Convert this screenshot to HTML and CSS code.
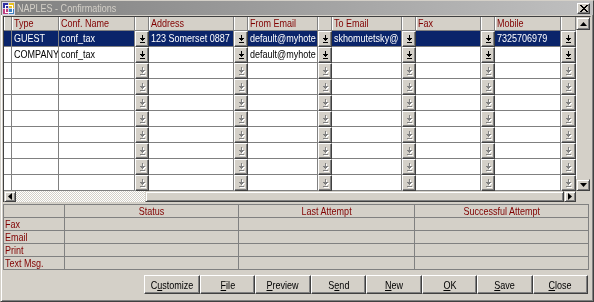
FILE: index.html
```html
<!DOCTYPE html>
<html lang="en">
<head>
  <meta charset="UTF-8" />
  <title>NAPLES - Confirmations</title>
  <link rel="stylesheet" href="styles.css">
</head>
<body>
  <svg class="defs" xmlns="http://www.w3.org/2000/svg">
    <symbol id="dl" viewBox="0 0 7 8">
      <rect x="3" y="0" width="1" height="3"/>
      <rect x="1" y="3" width="5" height="1"/>
      <rect x="2" y="4" width="3" height="1"/>
      <rect x="3" y="5" width="1" height="1"/>
      <rect x="1" y="7" width="5" height="1"/>
    </symbol>
  </svg>

  <div class="window">
    <!-- title bar -->
    <div class="titlebar">
      <svg class="app-icon" viewBox="0 0 13 13" shape-rendering="crispEdges">
        <rect x="0" y="0" width="13" height="13" fill="#d8d8e8"/>
        <rect x="1" y="1" width="5" height="5" fill="#3030a0"/>
        <rect x="7" y="1" width="5" height="5" fill="#e8c020"/>
        <rect x="1" y="7" width="5" height="5" fill="#c04080"/>
        <rect x="7" y="7" width="5" height="5" fill="#4080c0"/>
        <rect x="3" y="3" width="7" height="7" fill="none" stroke="#fff" stroke-width="1"/>
      </svg>
      <span class="title"><span class="t">NAPLES - Confirmations</span></span>
      <span class="close-btn">
        <svg width="8" height="7" viewBox="0 0 8 7" shape-rendering="crispEdges">
          <path d="M0 0h2v1h-2zM6 0h2v1h-2zM1 1h2v1h-2zM5 1h2v1h-2zM2 2h4v1h-4zM3 3h2v1h-2zM2 4h4v1h-4zM1 5h2v1h-2zM5 5h2v1h-2zM0 6h2v1h-2zM6 6h2v1h-2z"/>
        </svg>
      </span>
    </div>

    <div class="main">
      <!-- confirmation grid -->
      <div class="grid">
        <div class="table">
          <div class="row head">
            <div class="cell"></div>
            <div class="cell"><span class="t">Type</span></div>
            <div class="cell"><span class="t">Conf. Name</span></div>
            <div class="cell"></div>
            <div class="cell"><span class="t">Address</span></div>
            <div class="cell"></div>
            <div class="cell"><span class="t">From Email</span></div>
            <div class="cell"></div>
            <div class="cell"><span class="t">To Email</span></div>
            <div class="cell"></div>
            <div class="cell"><span class="t">Fax</span></div>
            <div class="cell"></div>
            <div class="cell"><span class="t">Mobile</span></div>
            <div class="cell"></div>
          </div>

          <div class="row sel">
            <div class="cell"></div>
            <div class="cell"><span class="t">GUEST</span></div>
            <div class="cell"><span class="t">conf_tax</span></div>
            <div class="cell drop"><svg><use href="#dl"/></svg></div>
            <div class="cell"><span class="t">123 Somerset 0887</span></div>
            <div class="cell drop"><svg><use href="#dl"/></svg></div>
            <div class="cell"><span class="t">default@myhote</span></div>
            <div class="cell drop"><svg><use href="#dl"/></svg></div>
            <div class="cell"><span class="t">skhomutetsky@</span></div>
            <div class="cell drop"><svg><use href="#dl"/></svg></div>
            <div class="cell"></div>
            <div class="cell drop"><svg><use href="#dl"/></svg></div>
            <div class="cell"><span class="t">7325706979</span></div>
            <div class="cell drop"><svg><use href="#dl"/></svg></div>
          </div>

          <div class="row">
            <div class="cell"></div>
            <div class="cell"><span class="t">COMPANY</span></div>
            <div class="cell"><span class="t">conf_tax</span></div>
            <div class="cell drop"><svg><use href="#dl"/></svg></div>
            <div class="cell"></div>
            <div class="cell drop"><svg><use href="#dl"/></svg></div>
            <div class="cell"><span class="t">default@myhote</span></div>
            <div class="cell drop"><svg><use href="#dl"/></svg></div>
            <div class="cell"></div>
            <div class="cell drop"><svg><use href="#dl"/></svg></div>
            <div class="cell"></div>
            <div class="cell drop"><svg><use href="#dl"/></svg></div>
            <div class="cell"></div>
            <div class="cell drop"><svg><use href="#dl"/></svg></div>
          </div>

          <div class="row empty">
            <div class="cell"></div><div class="cell"></div><div class="cell"></div>
            <div class="cell drop"><svg><use href="#dl"/></svg></div><div class="cell"></div>
            <div class="cell drop"><svg><use href="#dl"/></svg></div><div class="cell"></div>
            <div class="cell drop"><svg><use href="#dl"/></svg></div><div class="cell"></div>
            <div class="cell drop"><svg><use href="#dl"/></svg></div><div class="cell"></div>
            <div class="cell drop"><svg><use href="#dl"/></svg></div><div class="cell"></div>
            <div class="cell drop"><svg><use href="#dl"/></svg></div>
          </div>
          <div class="row empty">
            <div class="cell"></div><div class="cell"></div><div class="cell"></div>
            <div class="cell drop"><svg><use href="#dl"/></svg></div><div class="cell"></div>
            <div class="cell drop"><svg><use href="#dl"/></svg></div><div class="cell"></div>
            <div class="cell drop"><svg><use href="#dl"/></svg></div><div class="cell"></div>
            <div class="cell drop"><svg><use href="#dl"/></svg></div><div class="cell"></div>
            <div class="cell drop"><svg><use href="#dl"/></svg></div><div class="cell"></div>
            <div class="cell drop"><svg><use href="#dl"/></svg></div>
          </div>
          <div class="row empty">
            <div class="cell"></div><div class="cell"></div><div class="cell"></div>
            <div class="cell drop"><svg><use href="#dl"/></svg></div><div class="cell"></div>
            <div class="cell drop"><svg><use href="#dl"/></svg></div><div class="cell"></div>
            <div class="cell drop"><svg><use href="#dl"/></svg></div><div class="cell"></div>
            <div class="cell drop"><svg><use href="#dl"/></svg></div><div class="cell"></div>
            <div class="cell drop"><svg><use href="#dl"/></svg></div><div class="cell"></div>
            <div class="cell drop"><svg><use href="#dl"/></svg></div>
          </div>
          <div class="row empty">
            <div class="cell"></div><div class="cell"></div><div class="cell"></div>
            <div class="cell drop"><svg><use href="#dl"/></svg></div><div class="cell"></div>
            <div class="cell drop"><svg><use href="#dl"/></svg></div><div class="cell"></div>
            <div class="cell drop"><svg><use href="#dl"/></svg></div><div class="cell"></div>
            <div class="cell drop"><svg><use href="#dl"/></svg></div><div class="cell"></div>
            <div class="cell drop"><svg><use href="#dl"/></svg></div><div class="cell"></div>
            <div class="cell drop"><svg><use href="#dl"/></svg></div>
          </div>
          <div class="row empty">
            <div class="cell"></div><div class="cell"></div><div class="cell"></div>
            <div class="cell drop"><svg><use href="#dl"/></svg></div><div class="cell"></div>
            <div class="cell drop"><svg><use href="#dl"/></svg></div><div class="cell"></div>
            <div class="cell drop"><svg><use href="#dl"/></svg></div><div class="cell"></div>
            <div class="cell drop"><svg><use href="#dl"/></svg></div><div class="cell"></div>
            <div class="cell drop"><svg><use href="#dl"/></svg></div><div class="cell"></div>
            <div class="cell drop"><svg><use href="#dl"/></svg></div>
          </div>
          <div class="row empty">
            <div class="cell"></div><div class="cell"></div><div class="cell"></div>
            <div class="cell drop"><svg><use href="#dl"/></svg></div><div class="cell"></div>
            <div class="cell drop"><svg><use href="#dl"/></svg></div><div class="cell"></div>
            <div class="cell drop"><svg><use href="#dl"/></svg></div><div class="cell"></div>
            <div class="cell drop"><svg><use href="#dl"/></svg></div><div class="cell"></div>
            <div class="cell drop"><svg><use href="#dl"/></svg></div><div class="cell"></div>
            <div class="cell drop"><svg><use href="#dl"/></svg></div>
          </div>
          <div class="row empty">
            <div class="cell"></div><div class="cell"></div><div class="cell"></div>
            <div class="cell drop"><svg><use href="#dl"/></svg></div><div class="cell"></div>
            <div class="cell drop"><svg><use href="#dl"/></svg></div><div class="cell"></div>
            <div class="cell drop"><svg><use href="#dl"/></svg></div><div class="cell"></div>
            <div class="cell drop"><svg><use href="#dl"/></svg></div><div class="cell"></div>
            <div class="cell drop"><svg><use href="#dl"/></svg></div><div class="cell"></div>
            <div class="cell drop"><svg><use href="#dl"/></svg></div>
          </div>
          <div class="row empty">
            <div class="cell"></div><div class="cell"></div><div class="cell"></div>
            <div class="cell drop"><svg><use href="#dl"/></svg></div><div class="cell"></div>
            <div class="cell drop"><svg><use href="#dl"/></svg></div><div class="cell"></div>
            <div class="cell drop"><svg><use href="#dl"/></svg></div><div class="cell"></div>
            <div class="cell drop"><svg><use href="#dl"/></svg></div><div class="cell"></div>
            <div class="cell drop"><svg><use href="#dl"/></svg></div><div class="cell"></div>
            <div class="cell drop"><svg><use href="#dl"/></svg></div>
          </div>
        </div>

        <div class="vscroll">
          <span class="sbtn up"><svg width="7" height="4" viewBox="0 0 7 4"><path d="M3.5 0L7 4H0z"/></svg></span>
          <span class="vthumb"></span>
          <span class="sbtn down"><svg width="7" height="4" viewBox="0 0 7 4"><path d="M0 0h7L3.5 4z"/></svg></span>
        </div>

        <div class="hscroll">
          <span class="sbtn"><svg width="4" height="7" viewBox="0 0 4 7"><path d="M4 0v7L0 3.5z"/></svg></span>
          <span class="track"></span>
          <span class="hthumb"></span>
          <span class="sbtn"><svg width="4" height="7" viewBox="0 0 4 7"><path d="M0 0v7l4-3.5z"/></svg></span>
        </div>
        <div class="corner"></div>
      </div>

      <!-- delivery status -->
      <div class="status">
        <div class="srow shead"><div></div><div><span class="t">Status</span></div><div><span class="t">Last Attempt</span></div><div><span class="t">Successful Attempt</span></div></div>
        <div class="srow"><div><span class="t">Fax</span></div><div></div><div></div><div></div></div>
        <div class="srow"><div><span class="t">Email</span></div><div></div><div></div><div></div></div>
        <div class="srow"><div><span class="t">Print</span></div><div></div><div></div><div></div></div>
        <div class="srow"><div><span class="t">Text Msg.</span></div><div></div><div></div><div></div></div>
      </div>

      <div class="buttons">
        <button><span class="t">C<u>u</u>stomize</span></button>
        <button><span class="t"><u>F</u>ile</span></button>
        <button><span class="t"><u>P</u>review</span></button>
        <button><span class="t">S<u>e</u>nd</span></button>
        <button><span class="t"><u>N</u>ew</span></button>
        <button><span class="t"><u>O</u>K</span></button>
        <button><span class="t"><u>S</u>ave</span></button>
        <button><span class="t"><u>C</u>lose</span></button>
      </div>
    </div>
  </div>
</body>
</html>
```

FILE: styles.css
```css
* { box-sizing: border-box; }
body {
  margin: 0;
  font-family: "Liberation Sans", Arial, sans-serif;
  font-size: 11px;
  color: #000;
  background: #d4d0c8;
}
.defs { display: none; }

/* Arial Narrow look: squeeze the text horizontally */
.t {
  display: inline-block;
  transform: scaleX(0.82);
  transform-origin: 0 50%;
}

.window {
  width: 594px;
  height: 302px;
  background: #d4d0c8;
  border: 1px solid;
  border-color: #d4d0c8 #404040 #404040 #d4d0c8;
  box-shadow: inset 1px 1px #fff, inset -1px -1px #808080;
}

/* title bar */
.titlebar {
  display: flex;
  align-items: center;
  height: 14px;
  padding: 0 3px 0 1px;
  background: linear-gradient(to right, #808080, #c0c0c0);
  color: #d4d0c8;
}
.app-icon { width: 13px; height: 13px; margin-right: 2px; }
.title { flex: 1; line-height: 14px; white-space: nowrap; }
.close-btn {
  display: flex;
  align-items: center;
  justify-content: center;
  width: 13px;
  height: 11px;
  background: #d4d0c8;
  border: 1px solid;
  border-color: #fff #404040 #404040 #fff;
  box-shadow: inset -1px -1px #808080;
}

.main { padding: 1px 2px 0; }

/* grid */
.grid {
  display: grid;
  grid-template-columns: 572px 14px;
  width: 588px;
  border-top: 1px solid #404040;
  border-left: 1px solid #404040;
  border-right: 1px solid #d4d0c8;
}
.row {
  display: grid;
  grid-template-columns: 8px 47px 76px 14px 85px 14px 70px 14px 70px 14px 65px 14px 66px 15px;
  height: 16px;
}
.row.head { height: 14px; }
.cell {
  background: #fff;
  border-right: 1px solid #808080;
  border-bottom: 1px solid #808080;
  padding-left: 2px;
  line-height: 15px;
  overflow: hidden;
  white-space: nowrap;
}
.head .cell {
  background: #d4d0c8;
  color: #800000;
  line-height: 13px;
  box-shadow: inset 1px 0 #fff;
}
.sel .cell { background: #0a246a; color: #fff; }
.cell.drop {
  display: flex;
  align-items: center;
  justify-content: center;
  padding: 0;
  background: #d4d0c8;
  border: 1px solid;
  border-color: #fff #404040 #404040 #fff;
  box-shadow: inset -1px -1px #808080;
  color: #000;
}
.drop svg { width: 7px; height: 8px; fill: currentColor; shape-rendering: crispEdges; }
.empty .drop { color: #808080; }
.empty .drop svg { filter: drop-shadow(1px 1px 0 #fff); }

/* scrollbars */
.sbtn {
  display: flex;
  align-items: center;
  justify-content: center;
  background: #d4d0c8;
  border: 1px solid;
  border-color: #d4d0c8 #404040 #404040 #d4d0c8;
  box-shadow: inset 1px 1px #fff, inset -1px -1px #808080;
}
.vscroll { display: flex; flex-direction: column; }
.vscroll .up { height: 13px; }
.vscroll .down { height: 12px; }
.vthumb {
  flex: 1;
  background: #d4d0c8;
  border-left: 1px solid #fff;
}
.hscroll { display: flex; height: 11px; }
.hscroll .sbtn { width: 12px; }
.track {
  width: 129px;
  background: repeating-conic-gradient(#d4d0c8 0 25%, #fff 0 50%) 0 0 / 2px 2px;
}
.hthumb {
  flex: 1;
  background: #d4d0c8;
  border: 1px solid;
  border-color: #d4d0c8 #404040 #404040 #d4d0c8;
  box-shadow: inset 1px 1px #fff, inset -1px -1px #808080;
}
.corner { background: #d4d0c8; }

/* status table */
.status {
  width: 586px;
  margin-top: 2px;
  border-top: 1px solid #808080;
  border-left: 1px solid #808080;
}
.srow {
  display: grid;
  grid-template-columns: 61px 174px 176px 174px;
  height: 13px;
}
.srow > div {
  border-right: 1px solid #808080;
  border-bottom: 1px solid #808080;
  padding-left: 1px;
  color: #800000;
  line-height: 12px;
  white-space: nowrap;
}
.shead > div { text-align: center; }
.shead .t, .buttons .t { transform-origin: 50% 50%; }

/* buttons */
.buttons {
  display: flex;
  justify-content: flex-end;
  margin-top: 5px;
  padding-right: 3px;
}
.buttons button {
  width: 55px;
  height: 19px;
  padding: 0;
  font: inherit;
  color: #000;
  background: #d4d0c8;
  border: 1px solid;
  border-color: #fff #404040 #404040 #fff;
  box-shadow: inset -1px -1px #808080;
}
.buttons button:nth-child(odd) { width: 56px; }
```
